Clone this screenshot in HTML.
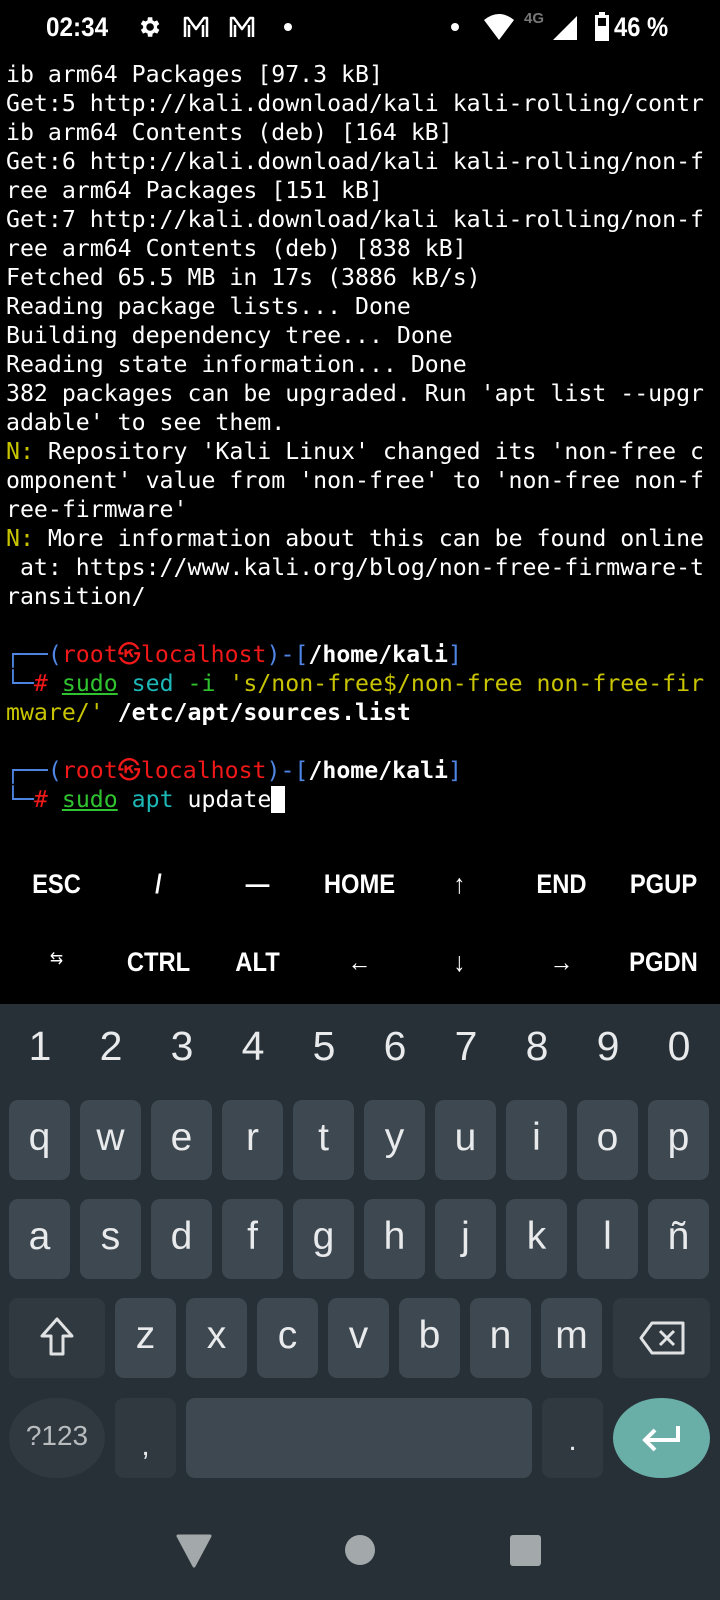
<!DOCTYPE html>
<html><head><meta charset="utf-8"><style>
*{margin:0;padding:0;box-sizing:border-box}
body{width:720px;height:1600px;background:#000;position:relative;overflow:hidden;font-family:"Liberation Sans",sans-serif;color:#fff}
.sb{position:absolute;top:0;left:0;width:720px;height:56px}
pre{position:absolute;left:6px;top:60px;font-family:"DejaVu Sans Mono","Liberation Mono",monospace;font-size:23.2px;line-height:29px;color:#fff;white-space:pre}
.b{color:#4f86e6}.r{color:#f01818}.w{color:#fff;font-weight:bold}.g{color:#2fc42f}.c{color:#1cb8b8}.y{color:#c8c400}.u{text-decoration:underline}
.ek{position:absolute;width:103px;text-align:center;font-size:27px;font-weight:bold;transform:scaleX(.88)}
.kb{position:absolute;top:1004px;left:0;width:720px;height:596px;background:#263036}
.d{position:absolute;width:40px;text-align:center;font-size:41px;color:#e8eaec;top:19px}
.k{position:absolute;width:61px;height:80px;background:#3e4850;border-radius:9px;text-align:center;font-size:39px;color:#e8eaec;line-height:76px}
.dk{background:#2f393f}
</style></head><body>
<div class="sb">
<div style="position:absolute;left:46px;top:12px;font-size:27px;font-weight:bold;transform:scaleX(.9);transform-origin:left">02:34</div>
<svg style="position:absolute;left:136px;top:14px" width="26" height="26" viewBox="0 0 24 24"><path fill="#fff" d="M19.4 13a7.5 7.5 0 000-2l2.1-1.6-2-3.5-2.5 1a7 7 0 00-1.7-1L15 3h-4l-.4 2.9a7 7 0 00-1.7 1l-2.5-1-2 3.5L6.6 11a7.5 7.5 0 000 2l-2.1 1.6 2 3.5 2.5-1a7 7 0 001.7 1L11 21h4l.4-2.9a7 7 0 001.7-1l2.5 1 2-3.5zM13 15.5a3.5 3.5 0 110-7 3.5 3.5 0 010 7z"/></svg>
<svg style="position:absolute;left:182px;top:15px" width="28" height="24" viewBox="0 0 28 24"><path d="M3 22V3h3l8 11 8-11h3v19M7 22V10M21 22V10" fill="none" stroke="#fff" stroke-width="2.5" stroke-linejoin="round"/></svg>
<svg style="position:absolute;left:228px;top:15px" width="28" height="24" viewBox="0 0 28 24"><path d="M3 22V3h3l8 11 8-11h3v19M7 22V10M21 22V10" fill="none" stroke="#fff" stroke-width="2.5" stroke-linejoin="round"/></svg>
<div style="position:absolute;left:284px;top:23px;width:8px;height:8px;border-radius:50%;background:#fff"></div>
<div style="position:absolute;left:451px;top:23px;width:8px;height:8px;border-radius:50%;background:#fff"></div>
<svg style="position:absolute;left:484px;top:14px" width="30" height="26" viewBox="0 0 30 26"><path d="M0 6Q15-6 30 6L15 26Z" fill="#fff"/></svg>
<div style="position:absolute;left:524px;top:10px;font-size:15px;font-weight:bold;color:#777">4G</div>
<svg style="position:absolute;left:553px;top:16px" width="24" height="24"><path d="M24 0V24H0Z" fill="#fff"/></svg>
<svg style="position:absolute;left:594px;top:12px" width="16" height="30"><rect x="5" y="0" width="6" height="3" fill="#fff"/><rect x="1" y="3" width="14" height="26" fill="#fff"/><rect x="4" y="6" width="8" height="8" fill="#000"/></svg>
<div style="position:absolute;left:614px;top:12px;font-size:27px;font-weight:bold;transform:scaleX(.88);transform-origin:left">46 %</div>
</div>
<pre>ib arm64 Packages [97.3 kB]
Get:5 http://kali.download/kali kali-rolling/contr
ib arm64 Contents (deb) [164 kB]
Get:6 http://kali.download/kali kali-rolling/non-f
ree arm64 Packages [151 kB]
Get:7 http://kali.download/kali kali-rolling/non-f
ree arm64 Contents (deb) [838 kB]
Fetched 65.5 MB in 17s (3886 kB/s)
Reading package lists... Done
Building dependency tree... Done
Reading state information... Done
382 packages can be upgraded. Run 'apt list --upgr
adable' to see them.
<span class="y">N:</span> Repository 'Kali Linux' changed its 'non-free c
omponent' value from 'non-free' to 'non-free non-f
ree-firmware'
<span class="y">N:</span> More information about this can be found online
 at: https://www.kali.org/blog/non-free-firmware-t
ransition/

<span class="b">┌──(</span><span class="r">root㉿localhost</span><span class="b">)-[</span><span class="w">/home/kali</span><span class="b">]</span>
<span class="b">└─</span><span class="r">#</span> <span class="g u">sudo</span> <span class="c">sed</span> <span class="g">-i</span> <span class="y">'s/non-free$/non-free non-free-fir</span>
<span class="y">mware/'</span> <span class="w">/etc/apt/sources.list</span>

<span class="b">┌──(</span><span class="r">root㉿localhost</span><span class="b">)-[</span><span class="w">/home/kali</span><span class="b">]</span>
<span class="b">└─</span><span class="r">#</span> <span class="g u">sudo</span> <span class="c">apt</span> update<span style="background:#fff"> </span></pre>
<div class="ek" style="left:5px;top:869px">ESC</div>
<div class="ek" style="left:107px;top:869px">/</div>
<div class="ek" style="left:206px;top:869px">—</div>
<div class="ek" style="left:308px;top:869px">HOME</div>
<div class="ek" style="left:408px;top:869px;font-weight:normal">↑</div>
<div class="ek" style="left:510px;top:869px">END</div>
<div class="ek" style="left:612px;top:869px">PGUP</div>
<div class="ek" style="left:5px;top:948px;font-size:18px;font-weight:normal">⇆</div>
<div class="ek" style="left:107px;top:947px">CTRL</div>
<div class="ek" style="left:206px;top:947px">ALT</div>
<div class="ek" style="left:308px;top:947px;font-weight:normal">←</div>
<div class="ek" style="left:408px;top:947px;font-weight:normal">↓</div>
<div class="ek" style="left:510px;top:947px;font-weight:normal">→</div>
<div class="ek" style="left:612px;top:947px">PGDN</div>
<div class="kb">
<div class="d" style="left:20px">1</div><div class="d" style="left:91px">2</div><div class="d" style="left:162px">3</div><div class="d" style="left:233px">4</div><div class="d" style="left:304px">5</div><div class="d" style="left:375px">6</div><div class="d" style="left:446px">7</div><div class="d" style="left:517px">8</div><div class="d" style="left:588px">9</div><div class="d" style="left:659px">0</div>
<div class="k" style="left:9px;top:96px">q</div><div class="k" style="left:80px;top:96px">w</div><div class="k" style="left:151px;top:96px">e</div><div class="k" style="left:222px;top:96px">r</div><div class="k" style="left:293px;top:96px">t</div><div class="k" style="left:364px;top:96px">y</div><div class="k" style="left:435px;top:96px">u</div><div class="k" style="left:506px;top:96px">i</div><div class="k" style="left:577px;top:96px">o</div><div class="k" style="left:648px;top:96px">p</div>
<div class="k" style="left:9px;top:195px">a</div><div class="k" style="left:80px;top:195px">s</div><div class="k" style="left:151px;top:195px">d</div><div class="k" style="left:222px;top:195px">f</div><div class="k" style="left:293px;top:195px">g</div><div class="k" style="left:364px;top:195px">h</div><div class="k" style="left:435px;top:195px">j</div><div class="k" style="left:506px;top:195px">k</div><div class="k" style="left:577px;top:195px">l</div><div class="k" style="left:648px;top:195px">ñ</div>
<div class="k dk" style="left:9px;top:294px;width:96px"><svg width="40" height="44" viewBox="0 0 40 44" style="margin-top:18px"><path d="M20 3L5 20h9v18h12V20h9Z" fill="none" stroke="#e0e2e4" stroke-width="3" stroke-linejoin="round"/></svg></div>
<div class="k" style="left:115px;top:294px">z</div><div class="k" style="left:186px;top:294px">x</div><div class="k" style="left:257px;top:294px">c</div><div class="k" style="left:328px;top:294px">v</div><div class="k" style="left:399px;top:294px">b</div><div class="k" style="left:470px;top:294px">n</div><div class="k" style="left:541px;top:294px">m</div>
<div class="k dk" style="left:613px;top:294px;width:97px"><svg width="48" height="36" viewBox="0 0 48 36" style="margin-top:22px"><path d="M14 3h31v30H14L3 18Z" fill="none" stroke="#e0e2e4" stroke-width="3" stroke-linejoin="round"/><path d="M22 11l14 14M36 11L22 25" stroke="#e0e2e4" stroke-width="3"/></svg></div>
<div class="k dk" style="left:9px;top:394px;width:96px;border-radius:48px/41px;font-size:28px;color:#b8bcbf">?123</div>
<div class="k dk" style="left:115px;top:394px;font-size:30px;line-height:96px">,</div>
<div class="k" style="left:186px;top:394px;width:346px"></div>
<div class="k dk" style="left:542px;top:394px;font-size:30px;line-height:86px">.</div>
<div class="k" style="left:613px;top:394px;width:97px;border-radius:49px/41px;background:#6aaea8"><svg width="44" height="32" viewBox="0 0 44 32" style="margin-top:24px"><path d="M38 4v14H6M15 8L5 18l10 10" fill="none" stroke="#fff" stroke-width="4"/></svg></div>
<svg style="position:absolute;left:176px;top:530px" width="36" height="34"><path d="M2 2h32L18 32Z" fill="#a3a8ab" stroke="#a3a8ab" stroke-width="3" stroke-linejoin="round"/></svg>
<div style="position:absolute;left:345px;top:531px;width:30px;height:30px;border-radius:50%;background:#a3a8ab"></div>
<div style="position:absolute;left:510px;top:531px;width:31px;height:31px;border-radius:3px;background:#a3a8ab"></div>
</div>
</body></html>
